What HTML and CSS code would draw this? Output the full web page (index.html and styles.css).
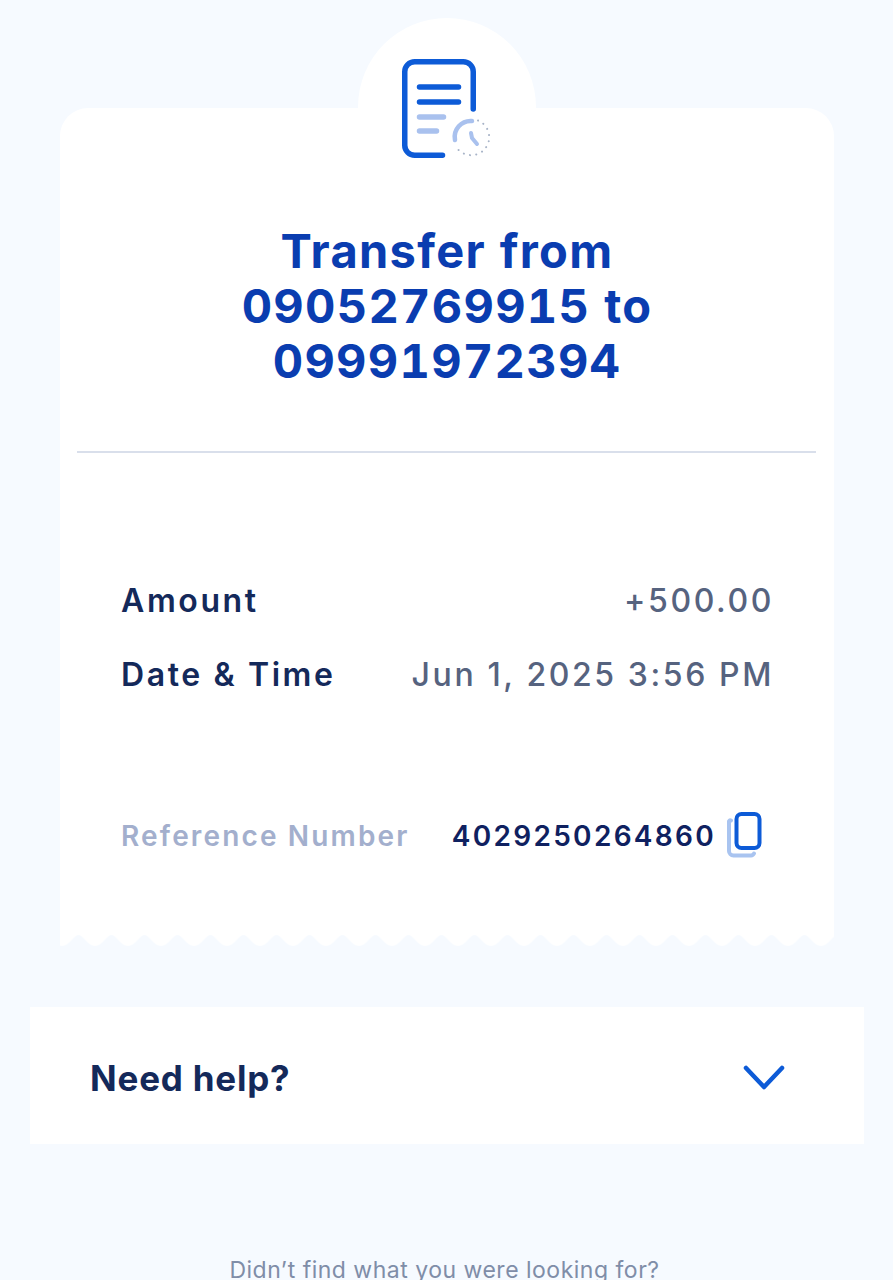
FILE: index.html
```html
<!DOCTYPE html>
<html lang="en">
<head>
<meta charset="utf-8">
<title>Transfer</title>
<link rel="stylesheet" href="styles.css">
</head>
<body>
<main class="page">
  <section class="receipt">
    <div class="badge" aria-hidden="true"></div>
    <svg class="badge-icon" width="92" height="104" viewBox="0 0 92 104" fill="none" stroke-linecap="round" aria-hidden="true">
      <path d="M74.250 52V14.750a10 10 0 0 0-10-10H15.750a10 10 0 0 0-10 10v73.500a10 10 0 0 0 10 10h27.750" stroke="#0d5bd7" stroke-width="5.500"/>
      <path d="M20.500 30h39M20.500 45h39" stroke="#0d5bd7" stroke-width="5.500"/>
      <path d="M20.500 60h24M20.500 74h17" stroke="#a9c1ee" stroke-width="5.500"/>
      <path d="M56 83A16 16 0 0 1 73 64" stroke="#a9c1ee" stroke-width="4.500"/>
      <path d="M72 76l1 5 5 6" stroke="#a9c1ee" stroke-width="4" stroke-linejoin="round"/>
      <path d="M79 63.500A18 18 0 1 1 56 88" stroke="#a8b4c8" stroke-width="2" stroke-dasharray="0.1 6.200"/>
    </svg>
    <div class="receipt-body">
      <h1 class="title">Transfer from<br>09052769915 to<br>09991972394</h1>
      <div class="rule"></div>
      <dl class="details">
        <div class="row"><dt class="row-label">Amount</dt><dd class="row-value">+500.00</dd></div>
        <div class="row"><dt class="row-label">Date &amp; Time</dt><dd class="row-value">Jun 1, 2025 3:56 PM</dd></div>
      </dl>
      <div class="reference">
        <span class="reference-label">Reference Number</span>
        <span class="reference-value">
          <span class="reference-number">4029250264860</span>
          <svg class="copy-icon" width="36" height="46" viewBox="0 0 36 46" fill="none" aria-hidden="true">
            <path d="M4 8.5a1.5 1.5 0 0 0-2 2V39a4.5 4.5 0 0 0 4.5 4.5h17.500a3.500 3.500 0 0 0 3-2" stroke="#a9c4f0" stroke-width="4" stroke-linecap="round"/>
            <rect x="9.500" y="2" width="23" height="34" rx="5" stroke="#0d5bd7" stroke-width="4"/>
          </svg>
        </span>
      </div>
    </div>
    <svg class="scallop" width="774" height="14" viewBox="0 0 774 14" aria-hidden="true">
      <defs>
        <pattern id="wave" width="33" height="14" patternUnits="userSpaceOnUse" x="18.500">
          <path d="M0 0h33v2C28 2 24 13 16.500 13S5 2 0 2z" fill="#fff"/>
        </pattern>
      </defs>
      <rect width="774" height="14" fill="url(#wave)"/>
    </svg>
  </section>

  <section class="help">
    <span class="help-label">Need help?</span>
    <svg class="chevron" width="42" height="26" viewBox="0 0 42 26" fill="none" aria-hidden="true">
      <path d="M3 3l18 19L39 3" stroke="#0d5bd7" stroke-width="4.500" stroke-linecap="round" stroke-linejoin="round"/>
    </svg>
  </section>

  <p class="footer-text">Didn’t find what you were looking for?</p>
</main>
</body>
</html>
```
FILE: styles.css
```css
* { box-sizing: border-box; }
html, body { margin: 0; padding: 0; }
body {
  height: 1280px;
  overflow: hidden;
  background: #f6faff;
  font-family: "Inter", "Liberation Sans", sans-serif;
}
.page {
  display: flex;
  flex-direction: column;
  padding-top: 108px;
}
.receipt {
  position: relative;
  width: 774px;
  margin-left: 60px;
}
.badge {
  position: absolute;
  left: 298px;
  top: -90px;
  width: 178px;
  height: 178px;
  border-radius: 50%;
  background: #fff;
}
.badge-icon {
  position: absolute;
  z-index: 1;
  left: 339px;
  top: -51px;
}
.receipt-body {
  position: relative;
  background: #fff;
  border-radius: 28px 28px 0 0;
  height: 825px;
  padding-top: 115px;
}
.title {
  margin: 0;
  font-size: 47px;
  line-height: 55px;
  font-weight: 700;
  font-variant-numeric: tabular-nums;
  letter-spacing: 1.3px;
  color: #0a3db0;
  text-align: center;
}
.rule {
  height: 2px;
  margin: 63px 18px 0 17px;
  background: #d9dfeb;
}
.details {
  margin: 127px 0 0;
  padding: 0 60px 0 61px;
  display: flex;
  flex-direction: column;
  gap: 34px;
}
.row {
  display: flex;
  justify-content: space-between;
  align-items: center;
  height: 40px;
  font-size: 32px;
  letter-spacing: 2.6px;
}
.row-label { color: #14295a; font-weight: 600; }
.row-value { margin: 0; color: #56637f; font-weight: 500; }
.reference {
  display: flex;
  justify-content: space-between;
  align-items: center;
  margin-top: 118px;
  padding: 0 71px 0 61px;
}
.reference-label {
  padding-top: 2px;
  font-size: 28px;
  font-weight: 600;
  letter-spacing: 2.15px;
  color: #a3afcd;
}
.reference-value {
  display: flex;
  align-items: center;
  gap: 11px;
}
.reference-number {
  padding-top: 2px;
  font-size: 28px;
  font-weight: 600;
  letter-spacing: 2.3px;
  color: #0f2160;
}
.scallop {
  display: block;
}
.help {
  display: flex;
  align-items: center;
  justify-content: space-between;
  width: 834px;
  height: 137px;
  margin: 60px 0 0 30px;
  padding: 5px 79px 0 60px;
  background: #fff;
}
.help-label {
  font-size: 35px;
  font-weight: 700;
  letter-spacing: 0.8px;
  color: #14295a;
}
.footer-text {
  margin: 112px 0 0;
  padding-right: 4px;
  font-size: 23px;
  line-height: 28px;
  letter-spacing: 0.5px;
  color: #7f8da8;
  text-align: center;
}
```
